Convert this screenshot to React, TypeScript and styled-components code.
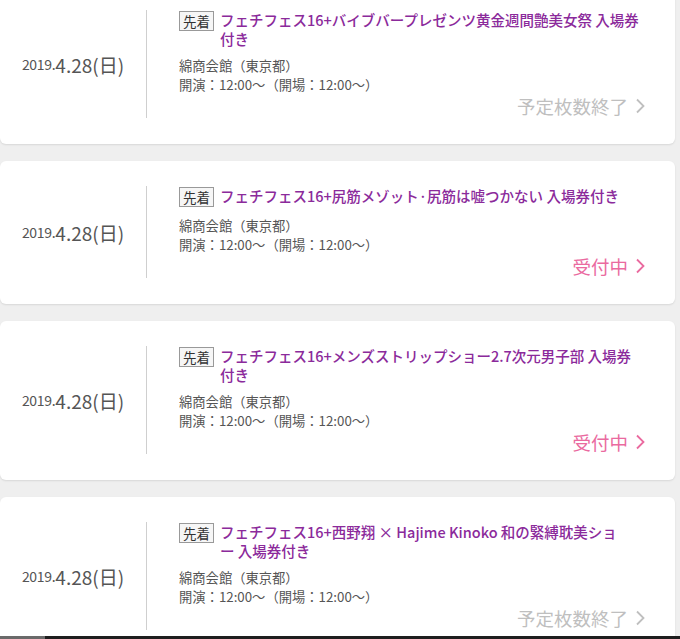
import styled, { createGlobalStyle } from "styled-components";

type Status = "closed" | "open";

interface EventItem {
  id: number;
  title: string;
  status: Status;
}

// line breaks follow the original page where the browser wrapped differently
const events: EventItem[] = [
  {
    id: 1,
    title: "フェチフェス16+バイブバープレゼンツ黄金週間艶美女祭 入場券付き",
    status: "closed",
  },
  {
    id: 2,
    title: "フェチフェス16+尻筋メゾット·尻筋は嘘つかない 入場券付き",
    status: "open",
  },
  {
    id: 3,
    title: "フェチフェス16+メンズストリップショー2.7次元男子部 入場券付き",
    status: "open",
  },
  {
    id: 4,
    title: "フェチフェス16+西野翔 × Hajime Kinoko 和の緊縛耽美ショ\nー 入場券付き",
    status: "closed",
  },
];

const GlobalStyle = createGlobalStyle`
  html, body {
    margin: 0;
    padding: 0;
    background: #efefef;
    overflow: hidden;
  }
  body {
    font-family: "Noto Sans CJK JP", "Noto Sans", sans-serif;
  }
`;

const List = styled.div`
  display: flex;
  flex-direction: column;
  gap: 17px;
  margin-top: -15px;
  padding-right: 5px;
`;

const Card = styled.div`
  display: flex;
  background: #fff;
  border-radius: 6px;
  box-shadow: 0 1px 2px rgba(0, 0, 0, 0.1);
  padding: 25px 30px 26px 0;
`;

const DateCol = styled.div`
  width: 146px;
  flex-shrink: 0;
  border-right: 1px solid #cfcfcf;
  display: flex;
  align-items: center;
  justify-content: center;
  color: #555;
  white-space: nowrap;
`;

const Year = styled.span`
  font-size: 14px;
  letter-spacing: -0.3px;
`;

const Day = styled.span`
  font-size: 19px;
`;

const Body = styled.div`
  flex: 1;
  padding-left: 32px;
  display: flex;
  flex-direction: column;
`;

const TitleRow = styled.div`
  display: flex;
  align-items: flex-start;
  gap: 6px;
`;

const Badge = styled.span`
  flex-shrink: 0;
  border: 1px solid #999;
  background: #f6f6f6;
  color: #333;
  font-size: 13.5px;
  line-height: 18px;
  padding: 0 3px;
  margin: 1px 0;
`;

const Title = styled.div`
  color: #8b2a9b;
  font-size: 14.5px;
  font-weight: 500;
  line-height: 19px;
  white-space: pre-line;
`;

const Info = styled.div`
  margin-top: 8px;
  color: #555;
  font-size: 13.3px;
  line-height: 19px;
`;

const StatusLink = styled.div<{ $status: Status }>`
  margin-top: 0;
  align-self: flex-end;
  display: flex;
  align-items: center;
  gap: 7px;
  font-size: 18.5px;
  line-height: 24px;
  color: ${(p) => (p.$status === "open" ? "#ea6a9f" : "#bfbfbf")};
`;

const BottomStrip = styled.div`
  position: fixed;
  left: 0;
  right: 0;
  bottom: 0;
  height: 3px;
  background: linear-gradient(to right, #6a6a6a 0 45px, #1e1e1e 45px);
`;

const Chevron = () => (
  <svg width="10" height="16" viewBox="0 0 10 16" fill="none">
    <polyline
      points="2,1.5 8.5,8 2,14.5"
      stroke="currentColor"
      strokeWidth="1.8"
      strokeLinejoin="miter"
    />
  </svg>
);

const EventCard = ({ item }: { item: EventItem }) => (
  <Card>
    <DateCol>
      <Year>2019.</Year>
      <Day>4.28(日)</Day>
    </DateCol>
    <Body>
      <TitleRow>
        <Badge>先着</Badge>
        <Title>{item.title}</Title>
      </TitleRow>
      <Info>
        綿商会館（東京都）
        <br />
        開演：12:00～（開場：12:00～）
      </Info>
      <StatusLink $status={item.status}>
        {item.status === "open" ? "受付中" : "予定枚数終了"}
        <Chevron />
      </StatusLink>
    </Body>
  </Card>
);

export default function App() {
  return (
    <>
      <GlobalStyle />
      <List>
        {events.map((e) => (
          <EventCard key={e.id} item={e} />
        ))}
      </List>
      <BottomStrip />
    </>
  );
}
